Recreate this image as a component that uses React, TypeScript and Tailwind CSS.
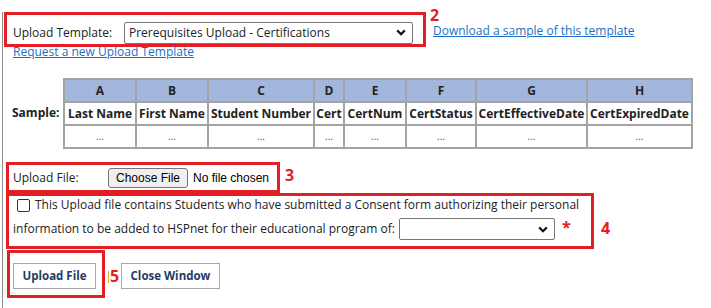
import React from "react";

const Chevron = () => (
  <svg width="10" height="7" viewBox="0 0 10 7" className="shrink-0">
    <path d="M1.2 1.4 L5 5.2 L8.8 1.4" fill="none" stroke="#111" strokeWidth="2.2" />
  </svg>
);

const cols = [
  { l: "A", n: "Last Name", w: "w-[72px]" },
  { l: "B", n: "First Name", w: "w-[72px]" },
  { l: "C", n: "Student Number", w: "w-[106px]" },
  { l: "D", n: "Cert", w: "w-[30px]" },
  { l: "E", n: "CertNum", w: "w-[62px]" },
  { l: "F", n: "CertStatus", w: "w-[70px]" },
  { l: "G", n: "CertEffectiveDate", w: "w-[111px]" },
  { l: "H", n: "CertExpiredDate", w: "w-[105px]" },
];

export default function App() {
  return (
    <div
      className="relative w-[711px] h-[308px] overflow-hidden bg-white text-[12px] text-[#222]"
      style={{ fontFamily: "'Open Sans', sans-serif" }}
    >
      <div className="ml-[2px] h-full border-l border-[#8c8c8c]">
        {/* Box 2 */}
        <div className="ml-[1px] mt-[12px] w-[422px] h-[35px] border-[3px] border-[#e31e24] flex items-center pl-[6px] pt-[6px]">
          <div className="w-[111px] leading-[18px]">Upload Template:</div>
          <div className="w-[289px] h-[22px] border border-[#767676] rounded-[2px] flex items-center justify-between pl-[4px] pr-[6px] leading-[18px]">
            <span>Prerequisites Upload - Certifications</span>
            <Chevron />
          </div>
        </div>
        <div className="ml-[10px] -mt-[3px] leading-[16px]">
          <span className="text-[#1d6fc5] underline">Request a new Upload Template</span>
        </div>

        {/* Table */}
        <div className="flex items-start mt-[18px]">
          <div className="ml-[9px] w-[51px] mt-[24px] leading-[22px] font-bold">Sample:</div>
          <table className="border-separate border-spacing-0 border border-[#a3a3a3] text-center">
            <tbody>
              <tr>
                {cols.map((c) => (
                  <td
                    key={c.l}
                    className={`${c.w} border border-[#a3a3a3] bg-[#a3b7dd] font-bold py-[1px] px-0 leading-[19px] whitespace-nowrap`}
                  >
                    {c.l}
                  </td>
                ))}
              </tr>
              <tr>
                {cols.map((c) => (
                  <td
                    key={c.l}
                    className="border border-[#a3a3a3] font-bold py-[1px] px-0 leading-[19px] whitespace-nowrap"
                  >
                    {c.n}
                  </td>
                ))}
              </tr>
              <tr>
                {cols.map((c) => (
                  <td
                    key={c.l}
                    className="border border-[#a3a3a3] py-[1px] px-0 leading-[19px] text-[10px] text-[#555]"
                  >
                    ...
                  </td>
                ))}
              </tr>
            </tbody>
          </table>
        </div>

        {/* Box 3 */}
        <div className="ml-[3px] mt-[13px] w-[274px] h-[31px] border-[3px] border-[#e31e24] flex items-center pl-[4px]">
          <div className="w-[95px] leading-[18px]">Upload File:</div>
          <div
            className="w-[80px] h-[20px] bg-[#efefef] border border-[#767676] rounded-[3px] flex items-center justify-center text-[12px] text-black"
            style={{ fontFamily: "'Liberation Sans', Arial, sans-serif" }}
          >
            Choose File
          </div>
          <div
            className="ml-[5px] text-[12px] text-black"
            style={{ fontFamily: "'Liberation Sans', Arial, sans-serif" }}
          >
            No file chosen
          </div>
        </div>

        {/* Box 4 */}
        <div className="ml-[3px] w-[588px] h-[56px] border-[3px] border-[#e31e24]">
          <div className="flex items-center h-[18px] pl-[8px] leading-[18px]">
            <span className="w-[13px] h-[13px] border border-[#333] rounded-[2px] bg-white shrink-0" />
            <span className="ml-[5px] w-[544px] whitespace-nowrap text-justify [text-align-last:justify]">
              This Upload file contains Students who have submitted a Consent form authorizing their personal
            </span>
          </div>
          <div className="flex items-center h-[22px] mt-[4px] pl-[4px] leading-[18px]">
            <span className="whitespace-nowrap">information to be added to HSPnet for their educational program of:</span>
            <div className="ml-[4px] w-[156px] h-[22px] border border-[#767676] rounded-[2px] flex items-center justify-end pr-[6px]">
              <Chevron />
            </div>
            <span className="ml-[7px] text-[#e31e24] font-bold text-[16px] leading-[16px] self-start mt-[1px]">*</span>
          </div>
        </div>

        {/* Box 5 row */}
        <div className="flex items-start mt-[1px]">
          <div className="ml-[4px] w-[98px] h-[48px] border-[3px] border-[#e31e24] pl-[3px] pt-[10px]">
            <div className="w-[83px] h-[26px] border border-[#a9a9a9] bg-white flex items-center justify-center font-bold text-[11.5px] text-[#1f3c64]">
              Upload File
            </div>
          </div>
          <div className="ml-[16px] mt-[13px] w-[99px] h-[26px] border border-[#a9a9a9] bg-white flex items-center justify-center font-bold text-[11.5px] text-[#1f3c64]">
            Close Window
          </div>
        </div>
      </div>

      {/* Download link */}
      <div className="absolute left-[433px] top-[23px] leading-[16px]">
        <span className="text-[#1d6fc5] underline">Download a sample of this template</span>
      </div>

      {/* Annotations */}
      <div className="absolute left-[430px] top-[7px] text-[16px] leading-[16px] font-bold text-[#e31e24]">2</div>
      <div className="absolute left-[285px] top-[167px] text-[16px] leading-[16px] font-bold text-[#e31e24]">3</div>
      <div className="absolute left-[601px] top-[220px] text-[16px] leading-[16px] font-bold text-[#e31e24]">4</div>
      <div className="absolute left-[108px] top-[271px] w-[1px] h-[12px] bg-[#e8a040]" />
      <div className="absolute left-[110px] top-[268px] text-[16px] leading-[16px] font-bold text-[#e31e24]">5</div>
    </div>
  );
}
